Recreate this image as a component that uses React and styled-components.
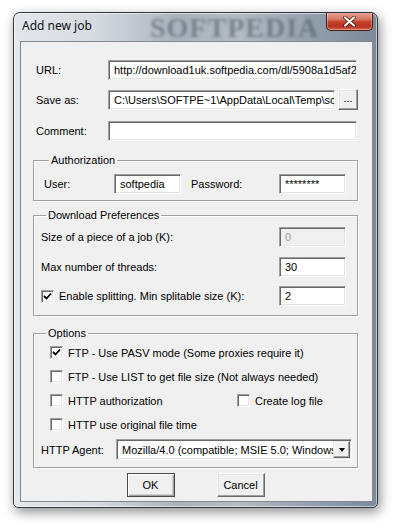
import React from 'react'
import styled, { createGlobalStyle } from 'styled-components'

const GlobalStyle = createGlobalStyle`
  html, body {
    margin: 0;
    padding: 0;
    background: #ffffff;
  }
  body {
    font-family: "Liberation Sans", Arial, sans-serif;
    font-size: 11px;
    color: #000;
  }
`

const Page = styled.div`
  width: 399px;
  height: 530px;
  padding: 12px 0 0 13px;
  box-sizing: border-box;
`

const Window = styled.div`
  position: relative;
  width: 365px;
  height: 496px;
  box-sizing: border-box;
  display: flex;
  flex-direction: column;
  border: 1px solid #2f3740;
  border-radius: 7px 7px 5px 5px;
  background: linear-gradient(to right, #e3e7eb 0%, #d6dbe0 22%, #aab3bc 45%, #b4bcc4 62%, #8f9ca9 85%, #7c8996 100%);
  box-shadow: 2px 4px 12px rgba(0, 0, 0, 0.45), inset 0 0 0 1px rgba(255, 255, 255, 0.55);
  overflow: hidden;
`

const TitleBar = styled.div`
  height: 28px;
  flex: none;
  display: flex;
  align-items: flex-start;
  padding: 0 4px 0 8px;
`

const Title = styled.span`
  margin-top: 5px;
  font-family: "Noto Sans", "Open Sans", sans-serif;
  font-size: 12px;
  line-height: 16px;
  color: #0a0f1a;
`

const CloseButton = styled.div`
  margin-left: auto;
  margin-top: -1px;
  width: 47px;
  height: 19px;
  box-sizing: border-box;
  border: 1px solid #4a1a14;
  border-top: none;
  border-radius: 0 0 5px 5px;
  background: linear-gradient(to bottom, #e9a99a 0%, #d87563 40%, #c2412b 55%, #b83322 80%, #d2634c 100%);
  box-shadow: inset 0 0 0 1px rgba(255, 255, 255, 0.35);
  display: flex;
  align-items: center;
  justify-content: center;
`

const TitleGlow = styled.span`
  position: absolute;
  left: 136px;
  top: -1px;
  font-family: "Liberation Serif", serif;
  font-weight: bold;
  font-size: 28px;
  letter-spacing: 1px;
  color: transparent;
  text-shadow: 0 0 3px rgba(70, 80, 92, 0.5);
  pointer-events: none;
  white-space: nowrap;
`

const Client = styled.div`
  flex: 1;
  margin: 0 4px 5px 6px;
  box-sizing: border-box;
  background: #f0f0f0;
  border: 1px solid #7f8993;
  padding: 18px 14px 0 12px;
  display: flex;
  flex-direction: column;
`

const FieldRow = styled.div`
  display: flex;
  align-items: center;
  padding-left: 3px;
  margin-top: ${p => p.mt || 0}px;
`

const Label = styled.span`
  width: ${p => p.w}px;
  margin-left: ${p => p.ml || 0}px;
  flex: none;
  white-space: nowrap;
`

const TextBox = styled.div`
  width: ${p => p.w}px;
  height: 20px;
  flex: none;
  box-sizing: border-box;
  border: 1px solid;
  border-color: #a0a0a0 #ffffff #ffffff #a0a0a0;
  box-shadow: inset 1px 1px 0 #696969, inset -1px -1px 0 #e3e3e3;
  background: ${p => (p.disabled ? '#f0f0f0' : '#ffffff')};
  color: ${p => (p.disabled ? '#a0a0a0' : '#000')};
  padding: 0 0 0 5px;
  line-height: 18px;
  white-space: nowrap;
  overflow: hidden;
`

const SmallButton = styled.div`
  width: 20px;
  height: 21px;
  margin-left: 3px;
  flex: none;
  box-sizing: border-box;
  border: 1px solid;
  border-color: #ffffff #696969 #696969 #ffffff;
  box-shadow: inset -1px -1px 0 #a0a0a0, inset 1px 1px 0 #e3e3e3;
  background: #f0f0f0;
  text-align: center;
  line-height: 17px;
`

const Group = styled.fieldset`
  margin: ${p => p.mt}px 0 0 0;
  padding: ${p => p.pt}px 0 ${p => p.pb}px ${p => p.pl}px;
  border: 1px solid #a0a0a0;
  box-shadow: 1px 1px 0 #ffffff, inset 1px 1px 0 #ffffff;
  min-width: 0;
  display: flex;
  flex-direction: column;
`

const Legend = styled.legend`
  margin-left: 5px;
  padding: 0 2px;
  line-height: 14px;
  font-size: 11px;
`

const PrefRow = styled.div`
  display: flex;
  align-items: center;
  margin-top: ${p => p.mt || 0}px;
`

const CheckRow = styled.div`
  display: flex;
  align-items: center;
  height: 13px;
  margin-top: ${p => p.mt || 0}px;
  margin-left: ${p => p.ml || 0}px;
`

const CheckItem = styled.div`
  display: flex;
  align-items: center;
  gap: 5px;
  width: ${p => (p.w ? `${p.w}px` : 'auto')};
  flex: none;
  white-space: nowrap;
`

const Box = styled.div`
  width: 13px;
  height: 13px;
  box-sizing: border-box;
  border: 1px solid;
  border-color: #a0a0a0 #ffffff #ffffff #a0a0a0;
  box-shadow: inset 1px 1px 0 #696969, inset -1px -1px 0 #e3e3e3;
  background: #ffffff;
  display: flex;
  align-items: center;
  justify-content: center;
`

const Combo = styled.div`
  width: 236px;
  height: 21px;
  box-sizing: border-box;
  border: 1px solid;
  border-color: #a0a0a0 #ffffff #ffffff #a0a0a0;
  box-shadow: inset 1px 1px 0 #696969, inset -1px -1px 0 #e3e3e3;
  background: #ffffff;
  display: flex;
  padding: 1px;
`

const ComboText = styled.div`
  flex: 1;
  padding-left: 4px;
  line-height: 19px;
  white-space: nowrap;
  overflow: hidden;
`

const ComboButton = styled.div`
  width: 17px;
  flex: none;
  box-sizing: border-box;
  border: 1px solid;
  border-color: #e3e3e3 #696969 #696969 #e3e3e3;
  box-shadow: inset -1px -1px 0 #a0a0a0, inset 1px 1px 0 #ffffff;
  background: #f0f0f0;
  display: flex;
  align-items: center;
  justify-content: center;
`

const Arrow = styled.div`
  width: 0;
  height: 0;
  border-left: 3.5px solid transparent;
  border-right: 3.5px solid transparent;
  border-top: 4px solid #000;
  margin-top: 1px;
`

const ButtonBar = styled.div`
  display: flex;
  justify-content: center;
  gap: 42px;
  margin-top: 5px;
`

const DialogButton = styled.div`
  width: 48px;
  height: 24px;
  box-sizing: border-box;
  border: 1px solid;
  border-color: ${p => (p.primary ? '#4a4a4a' : '#ffffff #696969 #696969 #ffffff')};
  box-shadow: ${p => (p.primary
    ? 'inset 1px 1px 0 #ffffff, inset -1px -1px 0 #a0a0a0, inset -2px -2px 0 #d0d0d0'
    : 'inset -1px -1px 0 #a0a0a0, inset 1px 1px 0 #e3e3e3')};
  background: #f0f0f0;
  display: flex;
  align-items: center;
  justify-content: center;
  font-size: 11px;
`

const Check = () => (
  <svg width="9" height="9" viewBox="0 0 9 9">
    <path d="M1 4 L3.5 6.5 L8 1.5" fill="none" stroke="#000" strokeWidth="1.8" />
  </svg>
)

const CheckBox = ({ checked, children, w }) => (
  <CheckItem w={w}>
    <Box>{checked && <Check />}</Box>
    {children}
  </CheckItem>
)

export default function App() {
  return (
    <Page>
      <GlobalStyle />
      <Window>
        <TitleBar>
          <Title>Add new job</Title>
          <CloseButton>
            <svg width="13" height="11" viewBox="0 0 13 11">
              <path d="M2 1.5 L11 9.5 M11 1.5 L2 9.5" stroke="#3a1008" strokeWidth="3.6" strokeLinecap="round" />
              <path d="M2 1.5 L11 9.5 M11 1.5 L2 9.5" stroke="#ffffff" strokeWidth="2.2" strokeLinecap="round" />
            </svg>
          </CloseButton>
        </TitleBar>
        <TitleGlow>SOFTPEDIA</TitleGlow>

        <Client>
          <FieldRow>
            <Label w={72}>URL:</Label>
            <TextBox w={249}>http://download1uk.softpedia.com/dl/5908a1d5af2f3e2ae42b06d1f2a9c5e4</TextBox>
          </FieldRow>
          <FieldRow mt={9}>
            <Label w={72}>Save as:</Label>
            <TextBox w={227}>C:\Users\SOFTPE~1\AppData\Local\Temp\softpedia.exe</TextBox>
            <SmallButton>...</SmallButton>
          </FieldRow>
          <FieldRow mt={11}>
            <Label w={72}>Comment:</Label>
            <TextBox w={249} />
          </FieldRow>

          <Group mt={12} pt={7} pb={6} pl={10}>
            <Legend>Authorization</Legend>
            <PrefRow>
              <Label w={70}>User:</Label>
              <TextBox w={67}>softpedia</TextBox>
              <Label w={88} ml={10}>Password:</Label>
              <TextBox w={67}>********</TextBox>
            </PrefRow>
          </Group>

          <Group mt={7} pt={5} pb={9} pl={7}>
            <Legend>Download Preferences</Legend>
            <PrefRow>
              <Label w={238}>Size of a piece of a job (K):</Label>
              <TextBox w={67} disabled>0</TextBox>
            </PrefRow>
            <PrefRow mt={10}>
              <Label w={238}>Max number of threads:</Label>
              <TextBox w={67}>30</TextBox>
            </PrefRow>
            <PrefRow mt={9}>
              <CheckBox checked w={238}>Enable splitting. Min splitable size (K):</CheckBox>
              <TextBox w={67}>2</TextBox>
            </PrefRow>
          </Group>

          <Group mt={10} pt={6} pb={7} pl={7}>
            <Legend>Options</Legend>
            <CheckRow ml={9}>
              <CheckBox checked>FTP - Use PASV mode (Some proxies require it)</CheckBox>
            </CheckRow>
            <CheckRow ml={9} mt={11}>
              <CheckBox>FTP - Use LIST to get file size (Not always needed)</CheckBox>
            </CheckRow>
            <CheckRow ml={9} mt={11}>
              <CheckBox w={187}>HTTP authorization</CheckBox>
              <CheckBox>Create log file</CheckBox>
            </CheckRow>
            <CheckRow ml={9} mt={11}>
              <CheckBox>HTTP use original file time</CheckBox>
            </CheckRow>
            <PrefRow mt={8}>
              <Label w={75}>HTTP Agent:</Label>
              <Combo>
                <ComboText>Mozilla/4.0 (compatible; MSIE 5.0; Windows 98; DigExt)</ComboText>
                <ComboButton><Arrow /></ComboButton>
              </Combo>
            </PrefRow>
          </Group>

          <ButtonBar>
            <DialogButton primary>OK</DialogButton>
            <DialogButton>Cancel</DialogButton>
          </ButtonBar>
        </Client>
      </Window>
    </Page>
  )
}
